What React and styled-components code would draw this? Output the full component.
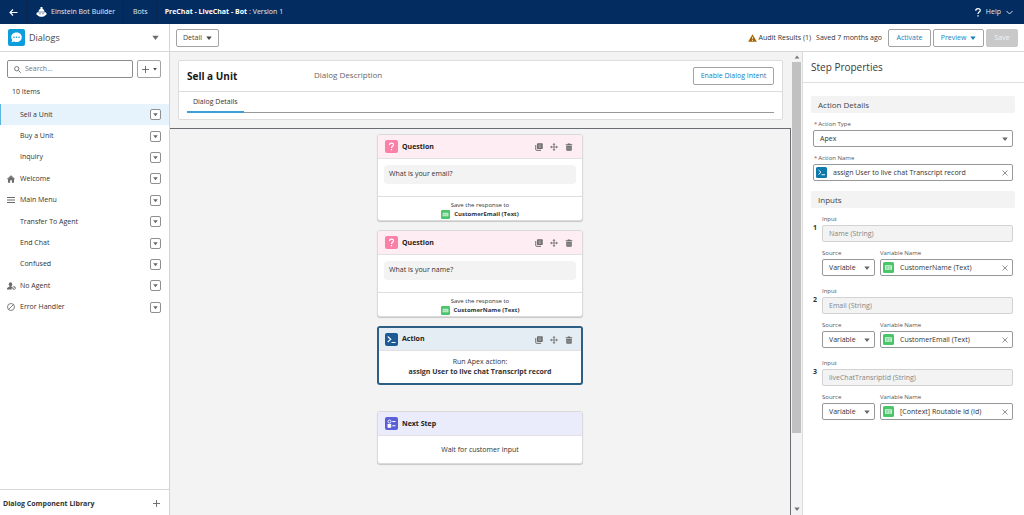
import React from 'react';
import styled, { createGlobalStyle, css } from 'styled-components';

const GlobalStyle = createGlobalStyle`
  * {
    box-sizing: border-box;
  }

  body {
    margin: 0;
    background: #fff;
    color: #333;
    font-family: 'Open Sans', 'Noto Sans', sans-serif;
    font-size: 7px;
    line-height: 10px;
  }

  button, input, select {
    font: inherit;
    color: inherit;
    margin: 0;
    padding: 0;
  }

  h1, h2, h3, p, ul {
    margin: 0;
    padding: 0;
  }

  svg {
    display: block;
    flex: none;
  }
`;

const Page = styled.div`
  display: flex;
  flex-direction: column;
  height: 100vh;
`;

/* ---------- top bar ---------- */

const TopBar = styled.header`
  display: flex;
  flex: none;
  height: 24px;
  background: #032d60;
  color: #e4eaf2;
`;

const TopLink = styled.a`
  display: flex;
  align-items: center;
  gap: 4px;
  padding: 0 8px 0 9px;
  border-right: 1px solid #0a2550;
  color: inherit;
  text-decoration: none;
`;

const Crumb = styled.div`
  display: flex;
  align-items: center;
  gap: 2px;
  padding: 0 8px;
  flex: 1;

  b {
    color: #fff;
  }
`;

const HelpButton = styled.button`
  display: flex;
  align-items: center;
  gap: 5px;
  margin-right: 11px;
  border: 0;
  background: none;
`;

/* ---------- shared controls ---------- */

const OutlineButton = styled.button`
  display: flex;
  align-items: center;
  justify-content: center;
  gap: 4px;
  flex: none;
  width: ${(p) => p.$width}px;
  height: 18px;
  border: 1px solid ${(p) => (p.$muted ? '#c9c9c9' : '#a3a3a3')};
  border-radius: 2px;
  background: ${(p) => (p.$muted ? '#c9c9c9' : '#fff')};
  color: ${(p) => (p.$muted ? '#f3f3f3' : p.$plain ? '#444' : '#1580bd')};
`;

const IconButton = styled.button`
  display: flex;
  align-items: center;
  justify-content: center;
  flex: none;
  border: 0;
  background: none;
  color: #6b6b6b;
`;

/* ---------- sidebar ---------- */

const Body = styled.div`
  display: flex;
  flex: 1;
  min-height: 0;
`;

const Sidebar = styled.aside`
  display: flex;
  flex-direction: column;
  flex: none;
  width: 170px;
  border-right: 1px solid #d4d4d4;
`;

const SidebarHead = styled.div`
  display: flex;
  align-items: center;
  gap: 4px;
  height: 28px;
  padding: 0 10px 0 8px;
  border-bottom: 1px solid #d8d8d8;

  h2 {
    flex: 1;
    font-size: 9px;
    font-weight: 400;
    color: #444;
  }
`;

const SearchRow = styled.div`
  display: flex;
  gap: 4px;
  padding: 8px 8px 0 7px;
`;

const SearchBox = styled.label`
  display: flex;
  align-items: center;
  gap: 4px;
  flex: 1;
  height: 18px;
  padding: 0 6px;
  border: 1px solid #8c8c8c;
  border-radius: 2px;
  color: #777;

  input {
    flex: 1;
    min-width: 0;
    border: 0;
    outline: 0;
    background: none;
  }

  input::placeholder {
    color: #777;
  }
`;

const Count = styled.p`
  padding: 9px 12px 7px;
`;

const DialogList = styled.ul`
  display: grid;
  grid-auto-rows: 1fr;
  height: 214px;
  list-style: none;
`;

const DialogItem = styled.li`
  display: flex;
  align-items: center;
  padding: 0 8px 0 6px;
  border-left: 1px solid ${(p) => (p.$active ? '#5eb4e0' : 'transparent')};
  background: ${(p) => (p.$active ? '#e6f3fc' : 'none')};
`;

const ItemIcon = styled.span`
  width: 13px;
  color: #6b6b6b;
`;

const ItemName = styled.span`
  flex: 1;
`;

const MenuButton = styled.button`
  display: flex;
  align-items: center;
  justify-content: center;
  width: 11px;
  height: 11px;
  border: 1px solid #8f8f8f;
  border-radius: 2px;
  background: #fff;
  color: #666;
`;

const Library = styled.div`
  display: flex;
  align-items: center;
  justify-content: space-between;
  height: 26px;
  margin-top: auto;
  padding: 2px 9px 0 3px;
  border-top: 1px solid #d8d8d8;
  font-weight: 700;
`;

/* ---------- workspace ---------- */

const Workspace = styled.div`
  display: flex;
  flex-direction: column;
  flex: 1;
  min-width: 0;
`;

const Toolbar = styled.div`
  display: flex;
  align-items: center;
  flex: none;
  height: 28px;
  padding: 0 6px;
  border-bottom: 1px solid #d8d8d8;
`;

const ToolbarRight = styled.div`
  display: flex;
  align-items: center;
  gap: 2px;
  margin-left: auto;
`;

const Audit = styled.span`
  display: flex;
  align-items: center;
  gap: 2px;
  margin-right: 3px;
`;

const Saved = styled.span`
  margin-right: 4px;
`;

const Panes = styled.div`
  display: flex;
  flex: 1;
  min-height: 0;
`;

const Canvas = styled.main`
  display: flex;
  flex-direction: column;
  flex: 1;
  min-width: 0;
  background: #f3f3f3;
`;

const DialogCard = styled.section`
  margin: 8px;
  height: 60px;
  border: 1px solid #dcdcdc;
  border-radius: 2px;
  background: #fff;
`;

const DialogHead = styled.div`
  display: flex;
  align-items: center;
  height: 31px;
  padding: 0 8px;
  border-bottom: 1px solid #dcdcdc;

  h1 {
    width: 127px;
    font-size: 10px;
    line-height: 16px;
    color: #181818;
  }

  p {
    flex: 1;
    padding-bottom: 2px;
    font-size: 8px;
    line-height: 12px;
    color: #666;
  }
`;

const Tabs = styled.div`
  display: flex;
  height: 21px;
  margin: 0 8px;
  border-bottom: 1px solid #999;
`;

const Tab = styled.button`
  height: 21px;
  padding: 0 6px;
  border: 0;
  border-bottom: 2px solid #3d9fd3;
  background: none;
`;

const Steps = styled.div`
  display: flex;
  flex-direction: column;
  align-items: center;
  gap: 9px;
  flex: 1;
  min-height: 0;
  padding-top: 5px;
  border-top: 1px solid #6b6d72;
  border-right: 1px solid #6b6d72;
`;

const themes = {
  question: { head: '#feeef3', tile: '#fb80a8' },
  action: { head: '#e5edf4', tile: '#1c5a96' },
  next: { head: '#eaebfb', tile: '#5a5fd6' },
};

const StepCard = styled.article`
  width: 206px;
  border: 1px solid #dadada;
  border-radius: 3px;
  background: #fff;
  box-shadow: 0 1px 1px rgba(0, 0, 0, 0.18);
  overflow: hidden;

  ${(p) => p.$selected && css`
    border: 2px solid #2d5f85;
    box-shadow: none;
  `}

  ${(p) => p.$last && css`
    margin-top: 17px;
  `}
`;

const StepHead = styled.div`
  display: flex;
  align-items: center;
  gap: 4px;
  height: ${(p) => (p.$selected ? 23 : 24)}px;
  padding: 0 ${(p) => (p.$selected ? 6 : 7)}px;
  border-bottom: 1px solid #e3dfe4;
  background: ${(p) => themes[p.$kind].head};

  h3 {
    flex: 1;
    font-size: 7px;
    color: #222;
  }
`;

const StepTile = styled.span`
  display: flex;
  align-items: center;
  justify-content: center;
  width: 13px;
  height: 13px;
  border-radius: 2px;
  background: ${(p) => themes[p.$kind].tile};
  color: #fff;
`;

const StepTools = styled.div`
  display: flex;
  gap: 7px;
  padding: 1px 2px 0 0;
`;

const Bubble = styled.p`
  height: 19px;
  margin: 6px 6px 12px;
  padding: 4px 5px;
  border-radius: 4px;
  background: #f3f3f3;
`;

const SaveTo = styled.div`
  display: flex;
  flex-direction: column;
  align-items: center;
  height: 24px;
  padding-top: 4px;
  border-top: 1px solid #dedede;
  font-size: 6px;
  line-height: 9px;

  b {
    display: flex;
    align-items: center;
    gap: 4px;
  }
`;

const StepText = styled.div`
  padding: ${(p) => (p.$single ? '9px 0 8px' : '6px 0')};
  text-align: center;
`;

/* ---------- scrollbar ---------- */

const ScrollTrack = styled.div`
  display: flex;
  flex-direction: column;
  align-items: center;
  flex: none;
  width: 12px;
  padding: 2px 0 3px;
  border-right: 1px solid #dcdcdc;
  background: #f3f3f3;
  color: #777;
`;

const ScrollThumb = styled.div`
  width: 9px;
  height: 81%;
  margin: 2px 0 auto;
  background: #c1c1c1;
`;

/* ---------- properties ---------- */

const Properties = styled.aside`
  flex: none;
  width: 221px;
  background: #fff;
`;

const PropertiesTitle = styled.h2`
  height: 31px;
  padding: 8px;
  border-bottom: 1px solid #dedede;
  font-size: 10px;
  font-weight: 400;
  line-height: 15px;
  color: #3a3a3a;
`;

const Section = styled.section`
  padding: 0 11px 0 10px;
`;

const SectionTitle = styled.h3`
  height: 17px;
  margin: ${(p) => p.$gap}px -2px 6px;
  padding: 0 7px;
  border-radius: 2px;
  background: #f3f3f3;
  font-size: 8px;
  font-weight: 400;
  line-height: 17px;
  color: #444;
`;

const Field = styled.div`
  display: flex;
  flex-direction: column;
  flex: ${(p) => (p.$width ? 'none' : 1)};
  width: ${(p) => (p.$width ? `${p.$width}px` : 'auto')};
  min-width: 0;
  margin-bottom: 6px;

  > label {
    height: 11px;
    font-size: 6px;
    color: #555;
  }

  i {
    padding: 0 1px;
    color: #c23934;
    font-style: normal;
  }
`;

const Control = styled.div`
  display: flex;
  align-items: center;
  height: 17px;
  border: 1px solid ${(p) => (p.$disabled ? '#d2d2d2' : '#999')};
  border-radius: 2px;
  background: ${(p) => (p.$disabled ? '#f3f3f3' : '#fff')};
  padding: 0 ${(p) => (p.$icon ? '4px 0 2px' : '6px')};
  gap: 6px;
  color: ${(p) => (p.$disabled ? '#868686' : '#333')};

  input {
    flex: 1;
    min-width: 0;
    height: 13px;
    border: 0;
    outline: 0;
    background: none;
  }
`;

const SelectBox = styled.div`
  display: grid;
  align-items: center;
  height: 17px;

  select {
    grid-area: 1 / 1;
    height: 17px;
    padding: 0 6px;
    border: 1px solid #999;
    border-radius: 2px;
    background: #fff;
    appearance: none;
  }

  svg {
    grid-area: 1 / 1;
    justify-self: end;
    margin-right: 5px;
    color: #666;
    pointer-events: none;
  }
`;

const InputGroup = styled.div`
  display: flex;
  gap: 5px;
  margin-bottom: 4px;
`;

const Index = styled.b`
  width: 4px;
  padding-top: 9px;
`;

const GroupFields = styled.div`
  flex: 1;
  min-width: 0;
`;

const Pair = styled.div`
  display: flex;
  gap: 5px;
`;

/* ---------- icons ---------- */

const Caret = ({ size = 7, up }) => (
  <svg width={size} height={size} viewBox="0 0 10 10" fill="currentColor">
    <path d={up ? 'M5 2.5 9 7.5H1z' : 'M0.5 2.5h9L5 8.5z'} />
  </svg>
);

const Plus = ({ size = 7 }) => (
  <svg width={size} height={size} viewBox="0 0 10 10" fill="none" stroke="#666" strokeWidth="1.3">
    <path d="M5 0v10M0 5h10" />
  </svg>
);

const Close = () => (
  <svg width="6" height="6" viewBox="0 0 12 12" fill="none" stroke="#666" strokeWidth="1.4">
    <path d="M1 1l10 10M11 1L1 11" />
  </svg>
);

const BackArrow = () => (
  <svg width="9" height="9" viewBox="0 0 18 18" fill="none" stroke="#fff" strokeWidth="2.2">
    <path d="M8 3L2 9l6 6M2 9h15" />
  </svg>
);

const BotIcon = () => (
  <svg width="11" height="10" viewBox="0 0 22 20" fill="#fff">
    <path d="M11 0c1.500 0 2.500 1 2.500 2.200 0 .8-.4 1.300-.8 1.800C15.500 4.500 17 6.500 17 9.500H5C5 6.500 6.500 4.500 9.300 4c-.4-.5-.8-1-.8-1.800C8.500 1 9.500 0 11 0z" />
    <path d="M1 13.500c0-2 1.300-3 3-3h14c1.700 0 3 1 3 3S20 16.500 18.500 16.500C17 18.800 14 19.500 11 19.500s-6-.7-7.500-3C2 16.500 1 15.500 1 13.500z" />
    <g fill="#032d60">
      <circle cx="8" cy="13.500" r="1.200" />
      <circle cx="14" cy="13.500" r="1.200" />
    </g>
  </svg>
);

const DialogsIcon = () => (
  <svg width="17" height="17" viewBox="0 0 34 34">
    <rect width="34" height="34" rx="4" fill="#0d9dda" />
    <path d="M17 7c6 0 10.500 4 10.500 9.500S23 26 17 26c-1.700 0-3.300-.3-4.700-1L7 26.500l1.700-4.700A9 9 0 0 1 6.500 16.500C6.500 11 11 7 17 7z" fill="#fff" />
    <g fill="#0d9dda">
      <circle cx="12" cy="16.500" r="1.600" />
      <circle cx="17" cy="16.500" r="1.600" />
      <circle cx="22" cy="16.500" r="1.600" />
    </g>
  </svg>
);

const SearchIcon = () => (
  <svg width="7" height="7" viewBox="0 0 14 14" fill="none" stroke="currentColor" strokeWidth="2">
    <circle cx="5.500" cy="5.500" r="4.300" />
    <path d="M9 9l4.500 4.500" />
  </svg>
);

const HomeIcon = () => (
  <svg width="8" height="8" viewBox="0 0 16 16" fill="currentColor">
    <path d="M8 .3l7.800 7.200-1 1.500L8 2.900 1.200 9l-1-1.500z" />
    <path d="M8 3l6 5.500v7H9.800v-5H6.200v5H2v-7z" />
  </svg>
);

const RowsIcon = () => (
  <svg width="8" height="8" viewBox="0 0 16 16" stroke="currentColor" strokeWidth="2">
    <path d="M0 3h16M0 8h16M0 13h16" />
  </svg>
);

const AgentIcon = () => (
  <svg width="9" height="8" viewBox="0 0 18 16" fill="currentColor">
    <ellipse cx="7" cy="4.500" rx="3.400" ry="4.200" />
    <path d="M0 15v-2c0-2 3-2.500 5-3.500V7h4v2.500l1.500.8A5 5 0 0 0 9.500 15z" />
    <circle cx="14" cy="12" r="3" fill="none" stroke="currentColor" strokeWidth="1.400" />
    <path d="M12 14l4-4" stroke="currentColor" strokeWidth="1.200" />
  </svg>
);

const BanIcon = () => (
  <svg width="8" height="8" viewBox="0 0 16 16" fill="none" stroke="currentColor" strokeWidth="1.700">
    <circle cx="8" cy="8" r="7" />
    <path d="M3 13L13 3" />
  </svg>
);

const WarningIcon = () => (
  <svg width="9" height="8" viewBox="0 0 18 16">
    <path d="M9 .5L17.700 15.500H.3z" fill="#a86403" />
    <path d="M9 5.500v5M9 12v2" stroke="#fff" strokeWidth="1.400" />
  </svg>
);

const HelpIcon = () => (
  <svg width="6" height="9" viewBox="0 0 12 18" fill="none" stroke="#fff" strokeWidth="2.500">
    <path d="M1.500 5.500C1.500 0 10.500 0 10.500 5c0 3-4.500 3.500-4.500 7" />
    <path d="M6 14.500v2.500" strokeWidth="2.800" />
  </svg>
);

const ChevronIcon = () => (
  <svg width="7" height="5" viewBox="0 0 14 10" fill="none" stroke="#d8e0ea" strokeWidth="2">
    <path d="M1 2l6 6 6-6" />
  </svg>
);

const QuestionMark = () => (
  <svg width="7" height="9" viewBox="0 0 14 18" fill="none" stroke="currentColor" strokeWidth="2.400">
    <path d="M3 6C3 1 11 1 11 5.500c0 3-4 3.200-4 6.500" />
    <path d="M7 14v2.500" strokeWidth="2.600" />
  </svg>
);

const PromptIcon = () => (
  <svg width="9" height="9" viewBox="0 0 18 18" fill="none" stroke="currentColor" strokeWidth="2.200">
    <path d="M1.500 3l6 5.500-6 5.500M9 15h8" />
  </svg>
);

const NextIcon = () => (
  <svg width="9" height="9" viewBox="0 0 18 18" fill="none" stroke="currentColor" strokeWidth="1.800">
    <circle cx="5" cy="5" r="3" />
    <rect x="2" y="11" width="5.500" height="5.500" fill="currentColor" />
    <path d="M10.500 5H17M10.500 13.500H17" strokeWidth="2.200" />
  </svg>
);

const CopyIcon = () => (
  <svg width="8" height="8" viewBox="0 0 16 16" fill="currentColor">
    <path d="M5.500 0.500H14a1.500 1.500 0 0 1 1.500 1.500v8.500A1.500 1.500 0 0 1 14 12H5.500A1.500 1.500 0 0 1 4 10.500V2A1.500 1.500 0 0 1 5.500.5z" />
    <path d="M1.500 4v9A1.500 1.500 0 0 0 3 14.700H12" fill="none" stroke="currentColor" strokeWidth="2" />
    <path d="M6.500 4h6M6.500 6.300h6M6.500 8.600h6" stroke="#ddd" strokeWidth="0.900" />
  </svg>
);

const MoveIcon = () => (
  <svg width="8" height="8" viewBox="0 0 16 16" fill="currentColor">
    <path d="M8 0l3 3.500H5zM8 16l3-3.500H5zM0 8l3.500-3v6zM16 8l-3.500-3v6z" />
    <path d="M8 3v10M3 8h10" stroke="currentColor" strokeWidth="1.600" />
  </svg>
);

const TrashIcon = () => (
  <svg width="8" height="8" viewBox="0 0 16 16" fill="currentColor">
    <path d="M5.500 2.500V.8h5v1.700h4v2h-13v-2z" />
    <path d="M2.500 5.500h11V14c0 1-.7 1.700-1.700 1.700H4.200c-1 0-1.700-.7-1.700-1.700z" />
    <path d="M6 7.500v6M10 7.500v6" stroke="#ddd" strokeWidth="0.900" />
  </svg>
);

const VariableIcon = ({ size }) => (
  <svg width={size} height={size} viewBox="0 0 22 22">
    <rect width="22" height="22" rx="3" fill="#4bc56a" />
    <rect x="4" y="6.500" width="14" height="9" rx="1" fill="#d6f3dd" />
    <path d="M6 8.500l3.500 5M9.500 8.500L6 13.500M11 9.500h5M11 12.500h5" stroke="#4bc56a" strokeWidth="1.300" />
  </svg>
);

const ApexIcon = () => (
  <svg width="11" height="11" viewBox="0 0 22 22">
    <rect width="22" height="22" rx="3" fill="#0e7aab" />
    <path d="M5 6l5 4.500L5 15M11 15.500h7" fill="none" stroke="#fff" strokeWidth="1.800" />
  </svg>
);

/* ---------- data ---------- */

const dialogs = [
  { name: 'Sell a Unit', active: true },
  { name: 'Buy a Unit' },
  { name: 'Inquiry' },
  { name: 'Welcome', icon: <HomeIcon /> },
  { name: 'Main Menu', icon: <RowsIcon /> },
  { name: 'Transfer To Agent' },
  { name: 'End Chat' },
  { name: 'Confused' },
  { name: 'No Agent', icon: <AgentIcon /> },
  { name: 'Error Handler', icon: <BanIcon /> },
];

const questions = [
  { text: 'What is your email?', variable: 'CustomerEmail (Text)' },
  { text: 'What is your name?', variable: 'CustomerName (Text)' },
];

const inputs = [
  { name: 'Name (String)', variable: 'CustomerName (Text)' },
  { name: 'Email (String)', variable: 'CustomerEmail (Text)' },
  { name: 'liveChatTransriptId (String)', variable: '[Context] Routable Id (Id)' },
];

const Tools = () => (
  <StepTools>
    <IconButton aria-label="Copy"><CopyIcon /></IconButton>
    <IconButton aria-label="Move"><MoveIcon /></IconButton>
    <IconButton aria-label="Delete"><TrashIcon /></IconButton>
  </StepTools>
);

const Lookup = ({ id, icon, value }) => (
  <Control $icon>
    {icon}
    <input id={id} defaultValue={value} />
    <IconButton aria-label="Clear"><Close /></IconButton>
  </Control>
);

const App = () => (
  <>
    <GlobalStyle />
    <Page>
      <TopBar>
        <TopLink href="#" aria-label="Back"><BackArrow /></TopLink>
        <TopLink href="#"><BotIcon />Einstein Bot Builder</TopLink>
        <TopLink href="#">Bots</TopLink>
        <Crumb><b>PreChat - LiveChat - Bot</b> : Version 1</Crumb>
        <HelpButton><HelpIcon />Help<ChevronIcon /></HelpButton>
      </TopBar>

      <Body>
        <Sidebar>
          <SidebarHead>
            <DialogsIcon />
            <h2>Dialogs</h2>
            <IconButton aria-label="Switch view"><Caret /></IconButton>
          </SidebarHead>
          <SearchRow>
            <SearchBox>
              <SearchIcon />
              <input type="text" placeholder="Search..." aria-label="Search" />
            </SearchBox>
            <OutlineButton $width={24} $plain aria-label="Add dialog"><Plus /><Caret size={4} /></OutlineButton>
          </SearchRow>
          <Count>10 Items</Count>
          <DialogList>
            {dialogs.map((d) => (
              <DialogItem key={d.name} $active={d.active}>
                <ItemIcon>{d.icon}</ItemIcon>
                <ItemName>{d.name}</ItemName>
                <MenuButton aria-label={`${d.name} menu`}><Caret size={5} /></MenuButton>
              </DialogItem>
            ))}
          </DialogList>
          <Library>
            Dialog Component Library
            <IconButton aria-label="Open library"><Plus /></IconButton>
          </Library>
        </Sidebar>

        <Workspace>
          <Toolbar>
            <OutlineButton $width={43} $plain>Detail<Caret size={6} /></OutlineButton>
            <ToolbarRight>
              <Audit><WarningIcon />Audit Results (1)</Audit>
              <Saved>Saved 7 months ago</Saved>
              <OutlineButton $width={43}>Activate</OutlineButton>
              <OutlineButton $width={51}>Preview<Caret size={6} /></OutlineButton>
              <OutlineButton $width={32} $muted disabled>Save</OutlineButton>
            </ToolbarRight>
          </Toolbar>

          <Panes>
            <Canvas>
              <DialogCard>
                <DialogHead>
                  <h1>Sell a Unit</h1>
                  <p>Dialog Description</p>
                  <OutlineButton $width={81}>Enable Dialog Intent</OutlineButton>
                </DialogHead>
                <Tabs>
                  <Tab>Dialog Details</Tab>
                </Tabs>
              </DialogCard>
              <Steps>
                {questions.map((q) => (
                  <StepCard key={q.text}>
                    <StepHead $kind="question">
                      <StepTile $kind="question"><QuestionMark /></StepTile>
                      <h3>Question</h3>
                      <Tools />
                    </StepHead>
                    <Bubble>{q.text}</Bubble>
                    <SaveTo>
                      Save the response to
                      <b><VariableIcon size={9} />{q.variable}</b>
                    </SaveTo>
                  </StepCard>
                ))}
                <StepCard $selected>
                  <StepHead $kind="action" $selected>
                    <StepTile $kind="action"><PromptIcon /></StepTile>
                    <h3>Action</h3>
                    <Tools />
                  </StepHead>
                  <StepText>
                    <p>Run Apex action:</p>
                    <p><b>assign User to live chat Transcript record</b></p>
                  </StepText>
                </StepCard>
                <StepCard $last>
                  <StepHead $kind="next">
                    <StepTile $kind="next"><NextIcon /></StepTile>
                    <h3>Next Step</h3>
                  </StepHead>
                  <StepText $single>Wait for customer input</StepText>
                </StepCard>
              </Steps>
            </Canvas>
            <ScrollTrack>
              <Caret size={6} up />
              <ScrollThumb />
              <Caret size={6} />
            </ScrollTrack>

            <Properties>
              <PropertiesTitle>Step Properties</PropertiesTitle>
              <Section>
                <SectionTitle $gap={13}>Action Details</SectionTitle>
                <Field>
                  <label htmlFor="action-type"><i>*</i>Action Type</label>
                  <SelectBox>
                    <select id="action-type"><option>Apex</option></select>
                    <Caret size={6} />
                  </SelectBox>
                </Field>
                <Field>
                  <label htmlFor="action-name"><i>*</i>Action Name</label>
                  <Lookup id="action-name" icon={<ApexIcon />} value="assign User to live chat Transcript record" />
                </Field>
              </Section>
              <Section>
                <SectionTitle $gap={10}>Inputs</SectionTitle>
                {inputs.map((input, i) => (
                  <InputGroup key={input.name}>
                    <Index>{i + 1}</Index>
                    <GroupFields>
                      <Field>
                        <label htmlFor={`input-${i}`}>Input</label>
                        <Control $disabled>
                          <input id={`input-${i}`} defaultValue={input.name} disabled />
                        </Control>
                      </Field>
                      <Pair>
                        <Field $width={53}>
                          <label htmlFor={`source-${i}`}>Source</label>
                          <SelectBox>
                            <select id={`source-${i}`}><option>Variable</option></select>
                            <Caret size={6} />
                          </SelectBox>
                        </Field>
                        <Field>
                          <label htmlFor={`variable-${i}`}>Variable Name</label>
                          <Lookup id={`variable-${i}`} icon={<VariableIcon size={11} />} value={input.variable} />
                        </Field>
                      </Pair>
                    </GroupFields>
                  </InputGroup>
                ))}
              </Section>
            </Properties>
          </Panes>
        </Workspace>
      </Body>
    </Page>
  </>
);

export default App;
